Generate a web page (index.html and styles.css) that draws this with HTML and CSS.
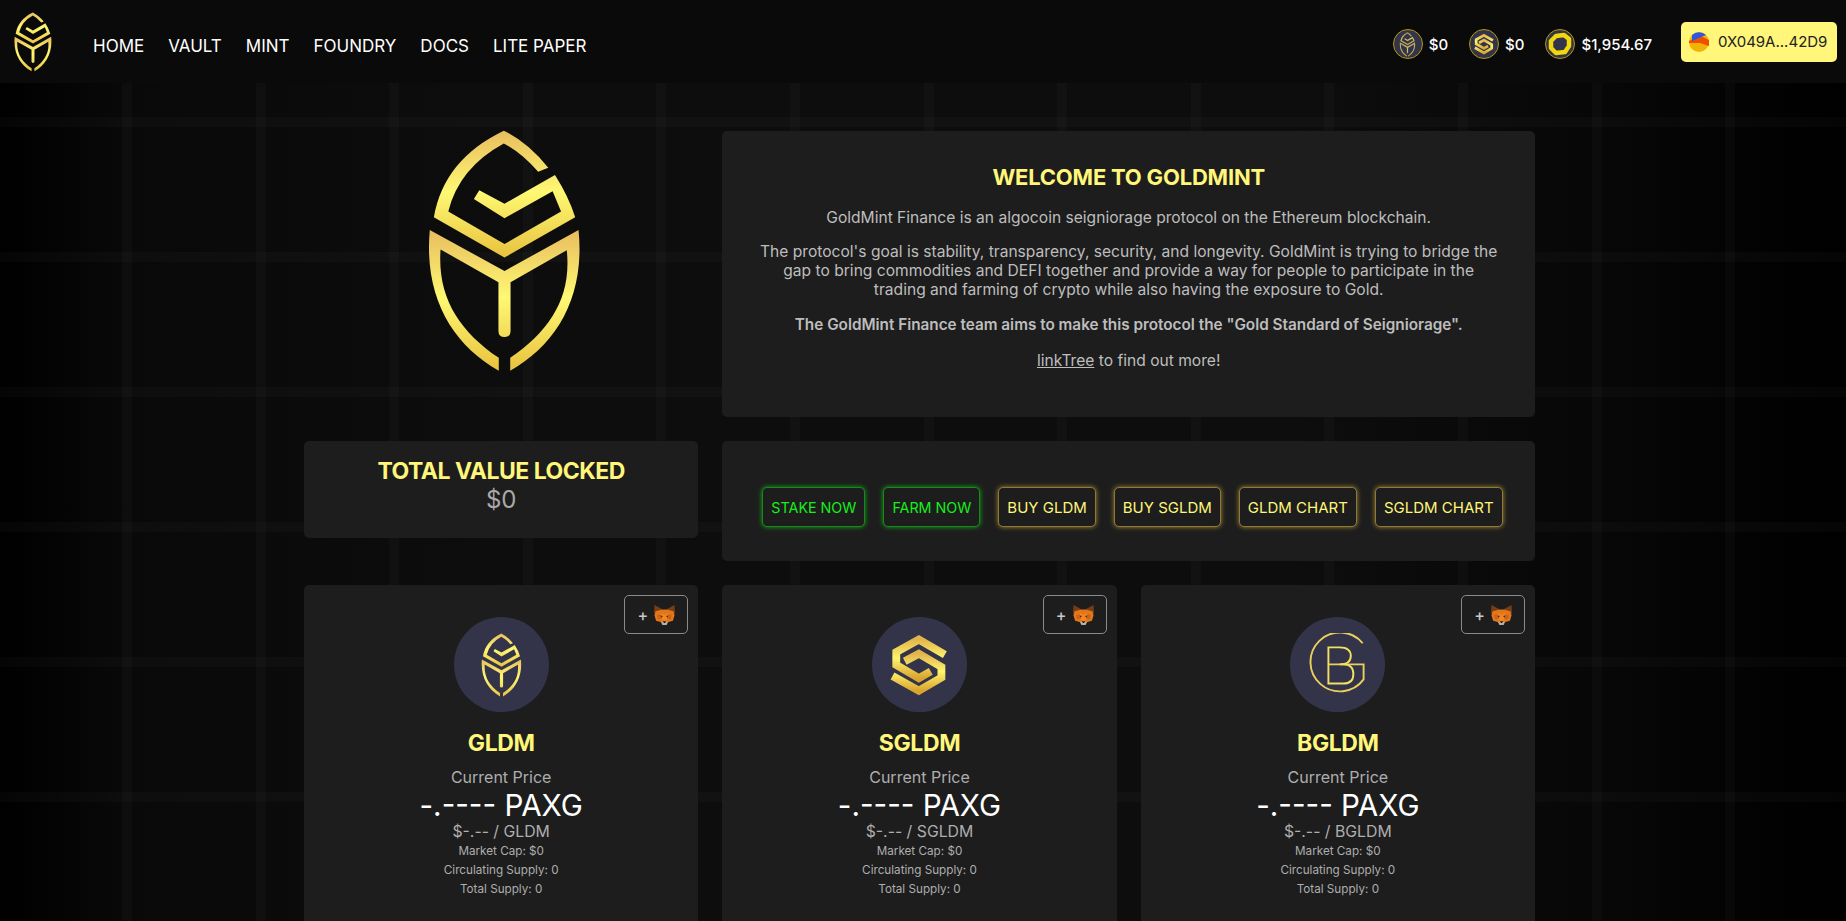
FILE: index.html
```html
<!DOCTYPE html>
<html lang="en">
<head>
<meta charset="utf-8">
<title>GoldMint</title>
<link rel="stylesheet" href="styles.css">
</head>
<body>
<svg class="defs" aria-hidden="true">
  <defs>
    <linearGradient id="gold" x1="0" y1="0" x2="0" y2="1">
      <stop offset="0" stop-color="#e8bd5e"/>
      <stop offset="0.48" stop-color="#fef873"/>
      <stop offset="1" stop-color="#e8c23e"/>
    </linearGradient>
    <linearGradient id="goldS" x1="0" y1="0" x2="0" y2="1">
      <stop offset="0" stop-color="#e2b54c"/>
      <stop offset="0.48" stop-color="#fdf56e"/>
      <stop offset="1" stop-color="#d9a52e"/>
    </linearGradient>
    <symbol id="leaf" viewBox="85 60 460 725">
      <path fill="url(#gold)" d="M313 65Q385 100 445 175L415 187Q365 130 313 103Q180 175 148 305L315 402L483 305L458 245L315 325L224 268L240 242L315 282L465 197Q505 260 525 322L315 442L105 322Q135 150 313 65Z"/>
      <path fill="url(#gold)" d="M93 360L315 482L535 360C555 560 470 700 332 778V740C450 660 515 560 500 420L333 515V660Q333 678 315 678Q297 678 297 660V515L125 418C115 560 180 660 298 740V778C160 700 75 560 93 360Z"/>
    </symbol>
    <symbol id="hex" viewBox="175 140 185 200">
      <path fill="none" stroke="url(#goldS)" stroke-width="25" d="M350 207L267 159L195 199V240L267 282L305 260"/>
      <path fill="none" stroke="url(#goldS)" stroke-width="25" d="M183 275L267 322L339 280V246L267 204L222 228"/>
    </symbol>
    <symbol id="bg" viewBox="175 140 180 200">
      <path fill="none" stroke="#e9cf5c" stroke-width="6" d="M342 172A92 92 0 1 0 345 285V238H235"/>
      <path fill="none" stroke="#f2e062" stroke-width="6" d="M235 238V185H270Q305 185 305 212Q305 238 270 238H282Q313 238 313 268Q313 298 282 298H235Z"/>
    </symbol>
    <symbol id="fox" viewBox="0 0 40 38">
      <path fill="#763d16" d="M1 0L16 8H24L39 0L40 14L37 22H3L0 14Z"/>
      <path fill="#e2761b" d="M3 12L14 9H26L37 12L39 20L36 30L26 33H14L4 30L1 20Z"/>
      <path fill="#f6851b" d="M14 15L20 19L26 15L29 25L20 31L11 25Z"/>
      <path fill="#cd6116" d="M6 19L13 18L15 26L8 27ZM34 19L27 18L25 26L32 27Z"/>
      <path fill="#233447" d="M13 20L17 21L14 24ZM27 20L23 21L26 24Z"/>
      <path fill="#c0ad9e" d="M13 32L27 32L24 38H16Z"/>
      <path fill="#161616" d="M17 31H23L21 34H19Z"/>
    </symbol>
  </defs>
</svg>

<header class="navbar">
  <svg class="nav-logo"><use href="#leaf"/></svg>
  <nav class="nav-links">
    <a>HOME</a>
    <a>VAULT</a>
    <a>MINT</a>
    <a>FOUNDRY</a>
    <a>DOCS</a>
    <a>LITE PAPER</a>
  </nav>
  <div class="nav-right">
    <div class="ticker">
      <span class="coin"><svg class="coin-leaf"><use href="#leaf"/></svg></span>
      <span>$0</span>
    </div>
    <div class="ticker">
      <span class="coin"><svg class="coin-hex"><use href="#hex"/></svg></span>
      <span>$0</span>
    </div>
    <div class="ticker">
      <span class="coin">
        <svg class="coin-ring" viewBox="0 0 24 24"><path fill="none" stroke="#f1d80c" stroke-width="4.5" stroke-linejoin="round" d="M8 4L16 3L21 7L21 14L17 20L8 21L3 16L3 9Z"/></svg>
      </span>
      <span>$1,954.67</span>
    </div>
    <button class="wallet">
      <svg class="jazz" viewBox="0 0 20 20">
        <circle cx="10" cy="10" r="10" fill="#f1b306"/>
        <path fill="#f04e01" d="M0 9L12 4L20 8V14L11 11L0 11Z"/>
        <path fill="#2e55e6" d="M3 3A10 10 0 0 1 17 3L12 5L3 9Z"/>
      </svg>
      <span>0X049A...42D9</span>
    </button>
  </div>
</header>

<main class="page">
  <div class="grid">
    <div class="hero-logo"><svg><use href="#leaf"/></svg></div>
    <section class="card welcome wide">
      <h1>WELCOME TO GOLDMINT</h1>
      <p>GoldMint Finance is an algocoin seigniorage protocol on the Ethereum blockchain.</p>
      <p>The protocol's goal is stability, transparency, security, and longevity. GoldMint is trying to bridge the<br>gap to bring commodities and DEFI together and provide a way for people to participate in the<br>trading and farming of crypto while also having the exposure to Gold.</p>
      <p class="strong">The GoldMint Finance team aims to make this protocol the "Gold Standard of Seigniorage".</p>
      <p><a class="link">linkTree</a> to find out more!</p>
    </section>

    <section class="card tvl">
      <h2>TOTAL VALUE LOCKED</h2>
      <div class="tvl-value">$0</div>
    </section>
    <section class="card actions wide">
      <a class="btn green">STAKE NOW</a>
      <a class="btn green">FARM NOW</a>
      <a class="btn gold">BUY GLDM</a>
      <a class="btn gold">BUY SGLDM</a>
      <a class="btn gold">GLDM CHART</a>
      <a class="btn gold">SGLDM CHART</a>
    </section>

    <section class="card token">
      <button class="add">+ <svg class="fox"><use href="#fox"/></svg></button>
      <div class="token-icon"><svg class="i-leaf"><use href="#leaf"/></svg></div>
      <h3>GLDM</h3>
      <div class="label">Current Price</div>
      <div class="price">-.---- PAXG</div>
      <div class="usd">$-.-- / GLDM</div>
      <div class="stat">Market Cap: $0</div>
      <div class="stat">Circulating Supply: 0</div>
      <div class="stat">Total Supply: 0</div>
    </section>
    <section class="card token">
      <button class="add">+ <svg class="fox"><use href="#fox"/></svg></button>
      <div class="token-icon"><svg class="i-hex"><use href="#hex"/></svg></div>
      <h3>SGLDM</h3>
      <div class="label">Current Price</div>
      <div class="price">-.---- PAXG</div>
      <div class="usd">$-.-- / SGLDM</div>
      <div class="stat">Market Cap: $0</div>
      <div class="stat">Circulating Supply: 0</div>
      <div class="stat">Total Supply: 0</div>
    </section>
    <section class="card token">
      <button class="add">+ <svg class="fox"><use href="#fox"/></svg></button>
      <div class="token-icon"><svg class="i-bg"><use href="#bg"/></svg></div>
      <h3>BGLDM</h3>
      <div class="label">Current Price</div>
      <div class="price">-.---- PAXG</div>
      <div class="usd">$-.-- / BGLDM</div>
      <div class="stat">Market Cap: $0</div>
      <div class="stat">Circulating Supply: 0</div>
      <div class="stat">Total Supply: 0</div>
    </section>
  </div>
</main>
</body>
</html>
```

FILE: styles.css
```css
* { box-sizing: border-box; }
html, body { margin: 0; height: 100%; overflow: hidden; }
body {
  font-family: "Inter", "Roboto", sans-serif;
  color: #bdbdbd;
  background-color: #080808;
  background-image:
    repeating-linear-gradient(90deg, transparent 0 122px, rgba(255,255,255,0.018) 122px 132px, transparent 132px 133.6px),
    repeating-linear-gradient(180deg, transparent 0 117px, rgba(255,255,255,0.018) 117px 127px, transparent 127px 135px),
    linear-gradient(90deg, #000 0, #090909 130px, #0d0d0d 500px, #0d0d0d 1300px, #070707 1600px, #000 1846px);
}
.defs { position: absolute; width: 0; height: 0; }

.navbar {
  height: 83px;
  background: #0a0a0a;
  display: flex;
  align-items: center;
  padding: 0 9px 0 14px;
}
.nav-logo { width: 38px; height: 60px; margin-right: 41px; }
.nav-links { display: flex; gap: 24px; padding-top: 9px; }
.nav-links a { color: #fff; font-size: 17px; font-weight: 400; }
.nav-right { margin-left: auto; display: flex; align-items: center; }
.ticker {
  display: flex;
  align-items: center;
  gap: 6px;
  margin-right: 21px;
  padding-top: 5px;
  color: #fff;
  font-size: 15px;
  font-weight: 500;
}
.coin {
  width: 30px;
  height: 30px;
  border-radius: 50%;
  border: 1px solid #b3960f;
  background: #33344a;
  display: flex;
  align-items: center;
  justify-content: center;
}
.coin-leaf { width: 17px; height: 25px; opacity: 0.75; }
.coin-hex { width: 20px; height: 22px; }
.coin-ring { width: 24px; height: 24px; }
.wallet {
  width: 156px;
  height: 40px;
  margin-left: 8px;
  border: 0;
  border-radius: 5px;
  background: #fff67a;
  color: #222;
  font: 400 15px "Inter", "Roboto", sans-serif;
  display: flex;
  align-items: center;
  gap: 9px;
  padding: 0 8px;
}
.jazz { width: 20px; height: 20px; flex: none; }

.page { padding: 48px 7px 0 0; }
.grid {
  width: 1231px;
  margin: 0 auto;
  display: grid;
  grid-template-columns: repeat(3, 1fr);
  gap: 24px;
  align-items: start;
}
.wide { grid-column: span 2; }
.card { background: #1d1d1d; border-radius: 5px; }

.hero-logo { display: flex; justify-content: center; padding-left: 6px; }
.hero-logo svg { width: 155px; height: 244px; margin-top: -2px; }

.welcome {
  height: 286px;
  padding: 32px 24px 0;
  text-align: center;
  font-size: 15.6px;
  line-height: 19px;
}
.welcome h1 {
  margin: 0 0 17px;
  color: #fff67a;
  font-size: 22px;
  line-height: 28px;
  font-weight: 700;
  letter-spacing: -0.2px;
}
.welcome p { margin: 0 0 15px; }
.welcome .strong { margin: 16px 0 17px; font-size: 15.3px; font-weight: 600; }
.link { text-decoration: underline; }

.tvl { height: 97px; padding-top: 16px; text-align: center; }
.tvl h2 {
  margin: 0;
  color: #fff67a;
  font-size: 23px;
  line-height: 28px;
  font-weight: 700;
  letter-spacing: -0.5px;
}
.tvl-value { font-size: 24px; line-height: 30px; color: #a9a9a9; }

.actions {
  height: 120px;
  display: flex;
  align-items: center;
  justify-content: flex-start;
  gap: 18px;
  padding: 12px 0 0 40px;
}
.btn {
  height: 40px;
  padding: 0 8px;
  display: flex;
  align-items: center;
  justify-content: center;
  border-radius: 5px;
  background: #1d1d1d;
  white-space: nowrap;
}
.green { font-size: 14.3px; color: #16f01c; border: 1px solid #178a1a; box-shadow: 0 0 5px #15a81a; }
.gold { font-size: 15px; color: #fff67a; border: 1px solid #8f7a35; box-shadow: 0 0 5px #a58c36; }

.token {
  position: relative;
  height: 360px;
  padding-top: 32px;
  text-align: center;
}
.add {
  position: absolute;
  top: 10px;
  right: 10px;
  width: 64px;
  height: 39px;
  background: transparent;
  border: 1px solid #8a8a8a;
  border-radius: 5px;
  color: #c8c8c8;
  font: 500 16px "Inter", sans-serif;
  display: flex;
  align-items: center;
  justify-content: center;
  gap: 6px;
}
.fox { width: 21px; height: 20px; }
.token-icon {
  width: 95px;
  height: 95px;
  margin: 0 auto;
  border-radius: 50%;
  background: #33344a;
  display: flex;
  align-items: center;
  justify-content: center;
}
.i-leaf { width: 41px; height: 64px; }
.i-hex { width: 58px; height: 64px; }
.i-bg { width: 58px; height: 64px; }
.token h3 {
  margin: 16px 0 0;
  color: #fff67a;
  font-size: 23px;
  line-height: 30px;
  font-weight: 700;
  letter-spacing: -0.4px;
}
.label { margin-top: 7px; font-size: 16px; line-height: 24px; color: #aeaeae; }
.price { font-size: 29.6px; line-height: 32px; color: #fff; }
.usd { font-size: 15.8px; line-height: 21px; color: #aeaeae; }
.stat { font-size: 11.7px; line-height: 19px; color: #aeaeae; }
```
